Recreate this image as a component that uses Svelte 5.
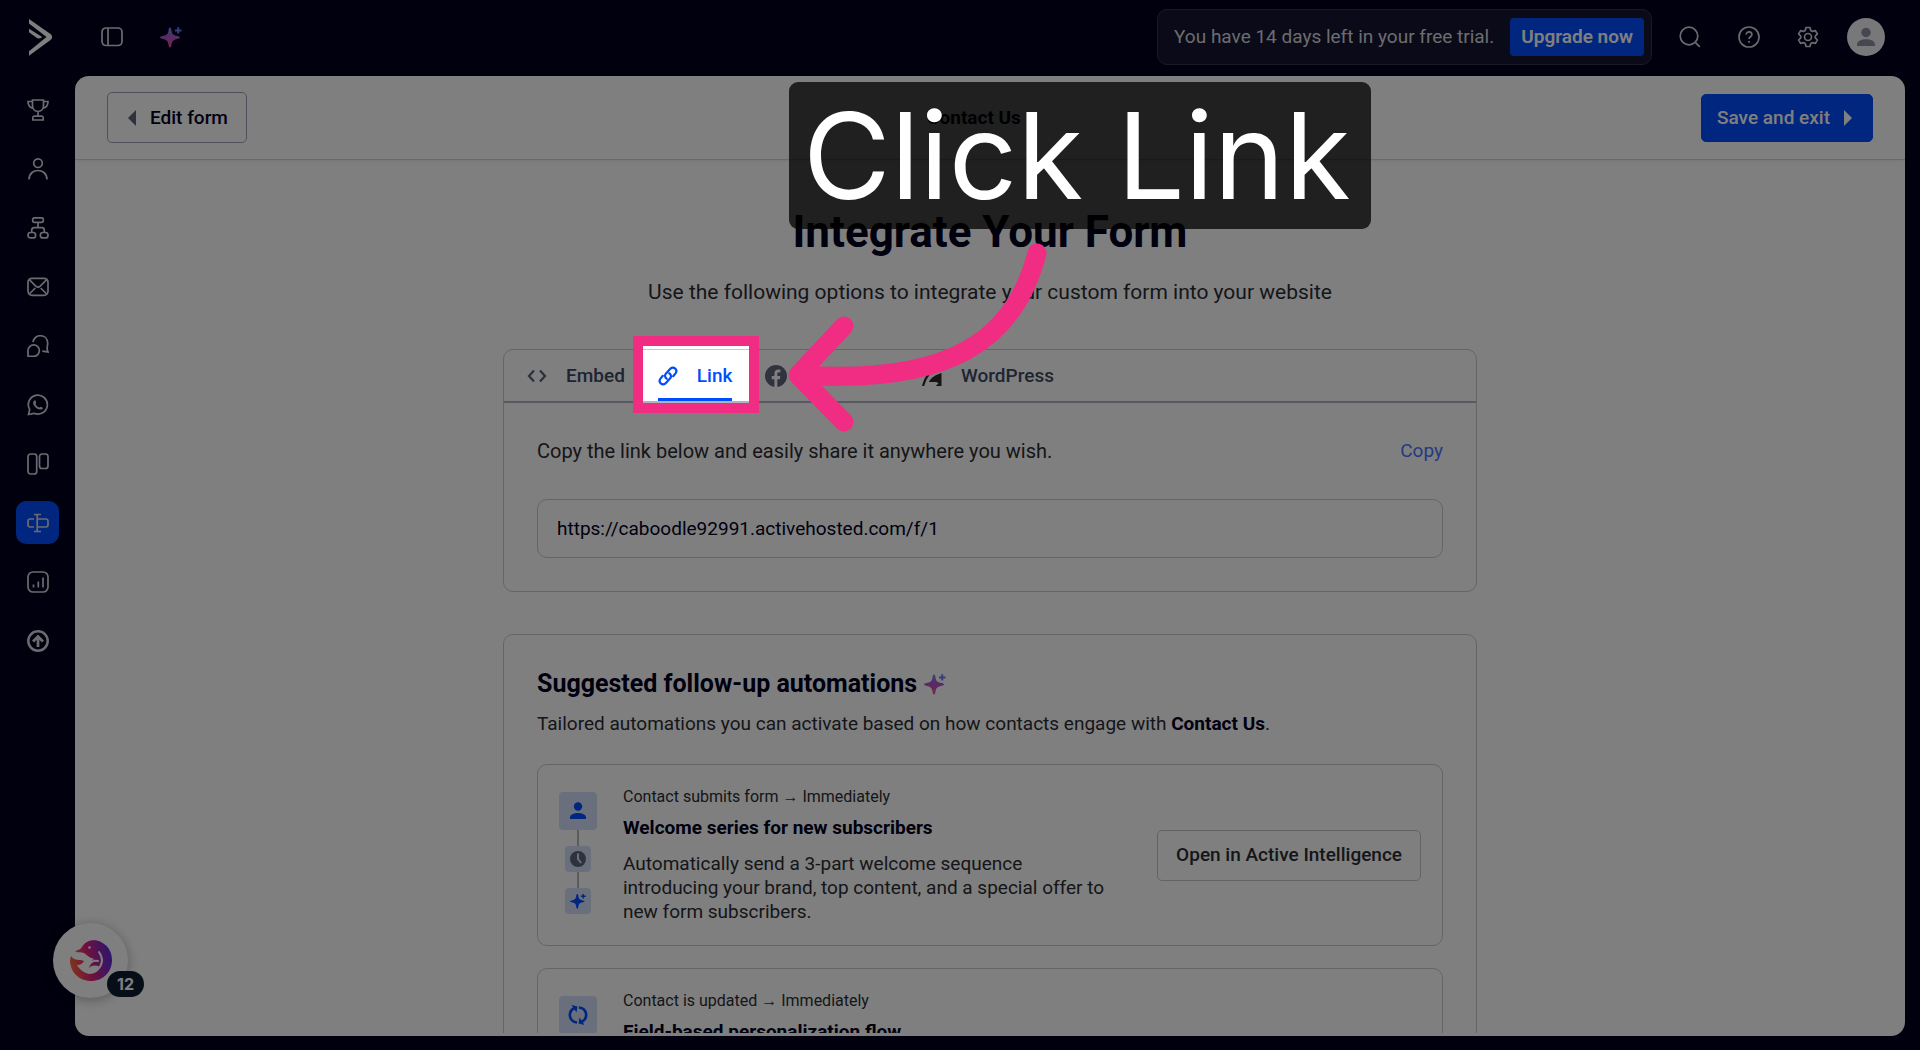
<script>
	const nav = [
		{ id: 'start', label: 'Getting started' },
		{ id: 'contacts', label: 'Contacts' },
		{ id: 'automations', label: 'Automations' },
		{ id: 'campaigns', label: 'Campaigns' },
		{ id: 'chat', label: 'Conversations' },
		{ id: 'whatsapp', label: 'WhatsApp' },
		{ id: 'deals', label: 'Deals' },
		{ id: 'forms', label: 'Forms' },
		{ id: 'reports', label: 'Reports' },
		{ id: 'upgrade', label: 'Upgrade' }
	]

	const tabs = [
		{ id: 'embed', label: 'Embed' },
		{ id: 'link', label: 'Link' },
		{ id: 'facebook', label: 'Facebook' },
		{ id: 'wordpress', label: 'WordPress' }
	]

	const automations = [
		{
			icon: 'person',
			trigger: 'Contact submits form → Immediately',
			title: 'Welcome series for new subscribers',
			text: 'Automatically send a 3-part welcome sequence introducing your brand, top content, and a special offer to new form subscribers.'
		},
		{
			icon: 'sync',
			trigger: 'Contact is updated → Immediately',
			title: 'Field-based personalization flow'
		}
	]

	let page = $state('forms')
	let tab = $state('link')
	let url = 'https://caboodle92991.activehosted.com/f/1'

	function copy() {
		navigator.clipboard?.writeText(url)
	}
</script>

{#snippet sparkle(fill)}
	<svg class="sparkle" viewBox="0 0 22 22" aria-hidden="true">
		<defs>
			<linearGradient id="spark" x1="0" y1="0" x2="0" y2="1">
				<stop offset="0" stop-color="#6f7cf5" />
				<stop offset=".5" stop-color="#b455c8" />
				<stop offset="1" stop-color="#f0508c" />
			</linearGradient>
		</defs>
		<path {fill} d="M10 1.500c1 0 1.200 1.200 1.500 3 .6 3.400 1.600 4.500 4.700 5.300 2.200.5 3.800.7 3.800 1.700s-1.600 1.200-3.800 1.700c-3.100.8-4.100 1.900-4.700 5.300-.3 1.800-.5 3-1.500 3s-1.200-1.200-1.500-3c-.6-3.400-1.600-4.500-4.700-5.300C1.600 12.700 0 12.500 0 11.500s1.600-1.200 3.800-1.700c3.100-.8 4.100-1.900 4.700-5.300.3-1.800.5-3 1.500-3z" />
		<path fill={fill == '#004cff' ? fill : '#6f7cf5'} d="M17.200 1.300h2v2.100h2.300v2h-2.300v2.200h-2V5.400H15v-2h2.200z" />
	</svg>
{/snippet}

<div class="app">
	<header class="topbar">
		<a class="logo" href="#home" aria-label="Home">
			<svg viewBox="0 0 23 37" width="23" height="37">
				<path fill="#fff" d="M0 0v4.500L17.500 18 0 32.200v4.600l21.500-15.700c2.200-1.700 2.200-4.500 0-6.200z" />
				<path fill="#fff" d="M0 9.700v3.600l7.200 5.200c1.900 1.400 3.600 1.300 5.400-.1l.6-.5z" />
			</svg>
		</a>
		<button class="plain" aria-label="Toggle sidebar">
			<svg viewBox="0 0 22 22" width="22" height="22" class="line"><rect x="1" y="2" width="20" height="17.500" rx="4" /><path d="M7 2v17.500" /></svg>
		</button>
		<button class="plain spark" aria-label="Active Intelligence">{@render sparkle('url(#spark)')}</button>
		<div class="trial">
			<span>You have 14 days left in your free trial.</span>
			<button class="upgrade">Upgrade now</button>
		</div>
		<div class="tools">
			<button class="plain" aria-label="Search">
				<svg viewBox="0 0 22 22" width="22" height="22" class="line"><circle cx="10" cy="10" r="8.800" /><path d="M16.300 16.300l4.500 4.500" /></svg>
			</button>
			<button class="plain" aria-label="Help">
				<svg viewBox="0 0 22 22" width="22" height="22" class="line"><circle cx="11" cy="11" r="10" /><path d="M8.200 8.600c0-3.700 5.700-3.600 5.700 0 0 2.300-2.800 2.100-2.800 4.400M11 15v1.800" /></svg>
			</button>
			<button class="plain" aria-label="Settings">
				<svg viewBox="0 0 22 22" width="22" height="22" class="line"><circle cx="11" cy="11" r="3.500" /><path stroke-linejoin="round" d="M9 1.500h4l.8 2.900 1.700 1 2.900-.8 2 3.400-2.100 2.100v1.800l2.100 2.100-2 3.400-2.900-.8-1.700 1-.8 2.900H9l-.8-2.900-1.700-1-2.900.8-2-3.400 2.100-2.100v-1.800L1.600 8l2-3.400 2.900.8 1.700-1z" /></svg>
			</button>
		</div>
		<button class="avatar" aria-label="Account">
			<svg viewBox="0 0 38 38" width="38" height="38"><circle cx="19" cy="19" r="19" fill="#f0f1f5" /><g fill="#8c90a3"><circle cx="19" cy="14.500" r="4.700" /><path d="M10 28v-1.500c0-7 18-7 18 0V28z" /></g></svg>
		</button>
	</header>

	<nav class="sidebar">
		{#each nav as item}
			<a href={'#' + item.id} aria-label={item.label} class:active={page == item.id} onclick={() => (page = item.id)}>
				<svg viewBox="0 0 22 22" width="22" height="22" class="line">
					{#if item.id == 'start'}
						<path d="M5.500 1h11v5.500c0 8-11 8-11 0zM5.500 2.500H1c0 4 1.500 6 5.200 6.800M16.500 2.500H21c0 4-1.500 6-5.200 6.800M11 12.500V17M5.800 21v-2.200c0-1 .5-1.700 1.500-1.700h7.400c1 0 1.500.7 1.500 1.700V21z" />
					{:else if item.id == 'contacts'}
						<circle cx="11" cy="5.200" r="4.300" /><path d="M2 21.500c0-12 18-12 18 0" />
					{:else if item.id == 'automations'}
						<rect x="5.700" y=".8" width="10.600" height="4.600" rx="1.800" /><rect x="1" y="15.500" width="7.600" height="5.400" rx="2.500" /><rect x="13.400" y="15.500" width="7.600" height="5.400" rx="2.500" /><path d="M11 5.500v5M4.700 15.300v-2c0-1.800.8-2.600 2.600-2.600h7.400c1.800 0 2.600.8 2.600 2.600v2" />
					{:else if item.id == 'campaigns'}
						<rect x="1" y="2.300" width="20" height="17" rx="4" /><path d="M2.300 3.700l6.500 6.500c1.700 1.500 2.700 1.500 4.400 0l6.500-6.500M2.300 18l6-6M19.700 18l-6-6" />
					{:else if item.id == 'chat'}
						<path d="M1 21.300V15.600a5.700 5.700 0 1 1 5.700 5.700zM6 7.200C7-1.800 20.700-1.300 20.700 8.200c0 3.500-1.600 5 .3 8.700l-5.700-.8" />
					{:else if item.id == 'whatsapp'}
						<path d="M1.500 20.500l1.200-5A9.500 9.500 0 1 1 7 19.300z" /><path class="solid" d="M7.800 6.300c.8-.2 1.300 1.800 1.400 2.300.1.500-.8 1-.7 1.400.5 1.500 2 3 3.700 3.600.5.100 1-1.100 1.500-.9 2.800 1.200 2.300 1.300 1.600 2.200C11.500 17.500 4.500 11 6.500 7.500z" />
					{:else if item.id == 'deals'}
						<rect x="1" y="1" width="8.700" height="20" rx="2.500" /><rect x="12.500" y="1" width="8.500" height="14.500" rx="2.500" />
					{:else if item.id == 'forms'}
						<path d="M7 7H3.200C1.700 7 1 7.700 1 9.200v3.600C1 14.300 1.700 15 3.200 15H7M10.700 7h8.100c1.500 0 2.200.7 2.200 2.200v3.600c0 1.500-.7 2.200-2.200 2.200h-8.100M10.200 3v16M7 2.500h7M7 19.500h7" />
					{:else if item.id == 'reports'}
						<rect x="1" y="1" width="20" height="20" rx="5" /><path d="M6.500 13.500v3M11.300 10.500v6M16 6.500v10" />
					{:else}
						<circle cx="11" cy="11" r="9.700" stroke-width="2.500" /><path stroke-width="2.800" d="M11 17V7M6 11.500l5-5 5 5" />
					{/if}
				</svg>
			</a>
		{/each}
	</nav>

	<main class="panel">
		<div class="bar">
			<button class="btn back"><svg viewBox="0 0 8 16" width="8" height="16"><path fill="#5a6478" d="M8 0v16L0 8z" /></svg>Edit form</button>
			<strong>Contact Us</strong>
			<button class="btn save">Save and exit<svg viewBox="0 0 8 16" width="8" height="16"><path fill="#fff" d="M0 0v16l8-8z" /></svg></button>
		</div>

		<div class="scroll">
			<h1>Integrate Your Form</h1>
			<p class="lead">Use the following options to integrate your custom form into your website</p>

			<section class="card">
				<div class="tabs" role="tablist">
					{#each tabs as t}
						<button role="tab" aria-selected={tab == t.id} class:current={tab == t.id} onclick={() => (tab = t.id)}>
							{#if t.id == 'embed'}
								<svg viewBox="0 0 20 20" width="20" height="20"><path fill="none" stroke="#5a6478" stroke-width="2.300" d="M7 4.500L2 10l5 5.500M13 4.500l5 5.500-5 5.500" /></svg>
							{:else if t.id == 'link'}
								<svg viewBox="0 0 20 20" width="20" height="20"><path fill="none" stroke="#004cff" stroke-width="2.200" stroke-linecap="round" d="M8.700 12.700c-2-1.200-2.200-3.700-.7-5.300l4.500-4.800c3.200-2.800 7.700 1.200 5 4.800l-2.300 2.800M11.300 7.300c2 1.200 2.200 3.700.7 5.300l-4.500 4.800c-3.200 2.800-7.700-1.200-5-4.800l2.300-2.800" /></svg>
							{:else if t.id == 'facebook'}
								<svg viewBox="0 0 22 22" width="22" height="22"><circle cx="11" cy="11" r="11" fill="#5f677b" /><path fill="#fff" d="M9.400 22v-7.800H6.700V11h2.700V8.600c0-2.800 1.600-4.200 4-4.200 1 0 2 .2 2 .2v2.700H14c-1.300 0-1.700.8-1.700 1.700v2h3l-.5 3.200h-2.500V22z" /></svg>
							{:else}
								<svg viewBox="0 0 20 20" width="20" height="20"><path fill="none" stroke="#2b2b2b" stroke-width="2.200" d="M1 20C3 12 8 5 15 1" /><path fill="#2b2b2b" d="M19.500 7v13h-6l3-2.500-2-1.500H6.800C9 11.500 14 8.500 19.500 7z" /></svg>
							{/if}
							{t.label}
						</button>
					{/each}
				</div>
				<div class="body">
					<div class="row">
						<label for="form-url">Copy the link below and easily share it anywhere you wish.</label>
						<button class="copy" onclick={copy}>Copy</button>
					</div>
					<input id="form-url" type="text" readonly value={url} />
				</div>
			</section>

			<section class="card suggested">
				<h2>Suggested follow-up automations {@render sparkle('url(#spark)')}</h2>
				<p>Tailored automations you can activate based on how contacts engage with <b>Contact Us</b>.</p>
				{#each automations as a}
					<article>
						<div class="steps">
							<span class="tile big">
								{#if a.icon == 'person'}
									<svg viewBox="0 0 18 18" width="18" height="18" fill="#004cff"><circle cx="9" cy="4.500" r="4.200" /><path d="M1 17v-1.500c0-6 16-6 16 0V17z" /></svg>
								{:else}
									<svg viewBox="0 0 20 20" width="20" height="20" fill="none" stroke="#004cff" stroke-width="2.600"><path d="M9 17.500C.5 16.500-.5 6.500 6.500 3M11 2.500c8.500 1 9.500 11 2.500 14.500" /><path fill="#004cff" stroke="none" d="M3.500 0l6 1.500-1 6zM16.500 20l-6-1.500 1-6z" /></svg>
								{/if}
							</span>
							<i></i>
							<span class="tile">
								<svg viewBox="0 0 16 16" width="16" height="16"><circle cx="8" cy="8" r="8" fill="#5a6478" /><path fill="none" stroke="#d5e3ff" stroke-width="2" d="M8 2.500V8l3.200 4" /></svg>
							</span>
							<i></i>
							<span class="tile mini">{@render sparkle('#004cff')}</span>
						</div>
						<div class="text">
							<small>{a.trigger}</small>
							<h3>{a.title}</h3>
							{#if a.text}<p>{a.text}</p>{/if}
						</div>
						<button class="btn open">Open in Active Intelligence</button>
					</article>
				{/each}
			</section>
		</div>
	</main>

	<button class="bubble" aria-label="Open assistant, 12 new">
		<svg viewBox="0 0 42 42" width="42" height="42">
			<defs>
				<linearGradient id="fish" x1="0" y1=".6" x2="1" y2=".4">
					<stop offset="0" stop-color="#ff6a3c" />
					<stop offset=".45" stop-color="#e0207c" />
					<stop offset="1" stop-color="#5a2be0" />
				</linearGradient>
			</defs>
			<path fill="url(#fish)" d="M5 11c3-1 5-1 7-4C17-1 26-.5 31 2c8 4 11 11 11 18 0 12-9 21-21 21C9 41 0 32 0 20l1-4c2 3 5 4 9 4 2 0 3 1 4 1-1 2-3 4-7 4 2 4 7 8 12 9 6 0 10-3 11-7-4-2-8-2-11 1 0-4 2-7 5-9-4-1-7-4-10-6-3-1-7 0-9-2z" />
			<path fill="none" stroke="#fff" stroke-width="2" stroke-linecap="round" d="M29 12c4 6 4 12-1 17M18 27c2-5 6-7 10-6" />
			<circle cx="19.500" cy="7.500" r="1.300" fill="#fff" />
		</svg>
		<span class="count">12</span>
	</button>

	<div class="spotlight"></div>
	<div class="callout">Click Link</div>
	<svg class="arrow" viewBox="0 0 270 200" width="270" height="200" aria-hidden="true">
		<path d="M257 13C235 100 170 145 20 135M64 86L18 135l46 47" />
	</svg>
</div>

<style>
	:global(body) {
		margin: 0;
	}

	.app {
		position: relative;
		display: grid;
		grid-template: 76px 1fr / 75px 1fr;
		box-sizing: border-box;
		height: 100vh;
		padding: 0 15px 14px 0;
		overflow: hidden;
		background: #00001c;
		color: #2b2d33;
		font: 19px/24px Roboto, "Noto Sans", sans-serif;
	}

	button {
		font: inherit;
		color: inherit;
		cursor: pointer;
		padding: 0;
		border: 0;
		background: none;
	}
	svg {
		display: block;
		flex: none;
	}
	.line {
		fill: none;
		stroke: #d6d7de;
		stroke-width: 1.7;
	}
	.line .solid {
		fill: #d6d7de;
		stroke: none;
	}
	.sparkle {
		width: 22px;
		height: 22px;
	}

	/* top bar */
	.topbar {
		grid-column: 1 / 3;
		display: flex;
		align-items: center;
		padding: 0 20px 2px 29px;
	}
	.logo {
		margin-right: 49px;
	}
	.spark {
		margin-left: 37px;
	}
	.trial {
		display: flex;
		align-items: center;
		gap: 16px;
		box-sizing: border-box;
		height: 56px;
		margin-left: auto;
		padding: 0 7px 0 16px;
		border: 1px solid #35354c;
		border-radius: 10px;
		background: #151530;
		color: #d8d9de;
	}
	.upgrade {
		height: 38px;
		padding: 0 11px;
		border-radius: 4px;
		background: #004cff;
		color: #fff;
		font-weight: 600;
	}
	.tools {
		display: flex;
		gap: 37px;
		margin: 0 28px 0 27px;
	}

	/* left rail */
	.sidebar {
		display: flex;
		flex-direction: column;
		align-items: center;
		gap: 16px;
		padding-top: 12px;
	}
	.sidebar a {
		display: grid;
		place-items: center;
		flex: none;
		width: 43px;
		height: 43px;
		border-radius: 10px;
	}
	.sidebar .active {
		background: #004cff;
	}

	.panel {
		display: flex;
		flex-direction: column;
		min-height: 0;
		padding-bottom: 3px;
		overflow: hidden;
		border-radius: 14px;
		background: #fff;
	}
	.bar {
		display: flex;
		flex: none;
		align-items: center;
		justify-content: space-between;
		padding: 16px 32px;
		border-bottom: 1px solid #d2d4da;
		box-shadow: 0 1px 3px rgba(0, 0, 0, .08);
	}
	.bar strong {
		color: #00001e;
	}
	.btn {
		display: flex;
		align-items: center;
		gap: 14px;
		box-sizing: border-box;
		height: 51px;
		border: 1px solid #c4c6cc;
		border-radius: 5px;
		font-weight: 500;
		white-space: nowrap;
	}
	.back {
		padding: 0 18px 0 20px;
		border-color: #9ea4b4;
		color: #00001e;
	}
	.save {
		height: 48px;
		padding: 0 20px 0 15px;
		border-color: #004cff;
		background: #004cff;
		color: #fff;
	}
	.open {
		padding: 0 18px;
		margin: auto 0 auto auto;
	}

	.scroll {
		flex: 1;
		display: flex;
		flex-direction: column;
		align-items: center;
		min-height: 0;
		padding-top: 46px;
		overflow: hidden;
	}
	h1, h2, h3, p {
		margin: 0;
	}
	h1, h2, h3, b {
		color: #00001e;
	}
	h1 {
		font-size: 44px;
		line-height: 52px;
	}
	.lead {
		margin: 20px 0 43px;
		font-size: 21px;
		line-height: 28px;
	}
	.card {
		box-sizing: border-box;
		flex: none;
		width: 100%;
		max-width: 974px;
		border: 1px solid #c8cad0;
		border-radius: 10px;
	}

	.tabs {
		display: flex;
		gap: 33px;
		padding: 0 23px;
		border-bottom: 2px solid #b0b4c2;
	}
	.tabs button {
		display: flex;
		align-items: center;
		gap: 19px;
		height: 51px;
		padding-top: 3px;
		box-sizing: border-box;
		border-bottom: 3px solid transparent;
		color: #3c4a64;
		font-weight: 500;
	}
	.tabs .current {
		border-color: #004cff;
		color: #004cff;
	}
	.body {
		padding: 34px 33px 33px;
	}
	.row {
		display: flex;
		justify-content: space-between;
		margin-bottom: 34px;
		font-size: 20px;
		line-height: 28px;
	}
	.copy {
		color: #4a74ff;
		font-size: 19px;
	}
	input {
		display: block;
		box-sizing: border-box;
		width: 100%;
		height: 59px;
		padding: 0 19px;
		border: 1px solid #c8cad0;
		border-radius: 10px;
		background: none;
		color: #00001e;
		font: inherit;
	}

	.suggested {
		margin-top: 42px;
		padding: 33px;
	}
	h2 {
		display: flex;
		align-items: center;
		gap: 7px;
		margin-bottom: 11px;
		font-size: 25px;
		line-height: 32px;
	}
	.suggested > p {
		margin-bottom: 28px;
		line-height: 25px;
	}
	article {
		display: flex;
		box-sizing: border-box;
		min-height: 182px;
		margin-bottom: 22px;
		padding: 21px;
		border: 1px solid #c8cad0;
		border-radius: 10px;
	}
	.steps {
		display: flex;
		flex-direction: column;
		align-items: center;
		margin-right: 26px;
		padding-top: 6px;
	}
	.tile {
		display: grid;
		place-items: center;
		width: 26px;
		height: 26px;
		border-radius: 4px;
		background: #d2dff8;
	}
	.big {
		width: 38px;
		height: 38px;
	}
	.mini .sparkle {
		width: 16px;
		height: 16px;
	}
	.steps i {
		width: 2px;
		height: 16px;
		background: #b4b6be;
	}
	.text {
		max-width: 488px;
	}
	small {
		display: block;
		font-size: 16px;
		line-height: 22px;
	}
	h3 {
		margin: 8px 0 12px;
		font-size: 19px;
		line-height: 24px;
	}

	/* floating assistant */
	.bubble {
		position: absolute;
		left: 53px;
		bottom: 52px;
		display: grid;
		place-items: center;
		width: 75px;
		height: 75px;
		border-radius: 50%;
		background: #fff;
		box-shadow: 0 2px 12px rgba(0, 0, 0, .3);
	}
	.count {
		position: absolute;
		left: 54px;
		top: 48px;
		width: 37px;
		height: 26px;
		border-radius: 13px;
		background: #101c30;
		color: #fff;
		font: bold 16px/26px Inter, sans-serif;
	}

	/* guide layer */
	.spotlight {
		position: absolute;
		left: calc(50% - 327px);
		top: 336px;
		box-sizing: border-box;
		width: 126px;
		height: 77px;
		border: 10px solid #f02d82;
		box-shadow: 0 0 0 9999px rgba(0, 0, 0, .5);
		pointer-events: none;
	}
	.callout {
		position: absolute;
		left: calc(50% - 171px);
		top: 82px;
		padding: 0 20px 0 14px;
		border-radius: 9px;
		background: rgba(0, 0, 0, .75);
		color: #fff;
		font: 120px/147px Inter, sans-serif;
		white-space: nowrap;
	}
	.arrow {
		position: absolute;
		left: calc(50% - 180px);
		top: 240px;
		fill: none;
		stroke: #f02d82;
		stroke-width: 19;
		stroke-linecap: round;
		stroke-linejoin: round;
		pointer-events: none;
	}
</style>
